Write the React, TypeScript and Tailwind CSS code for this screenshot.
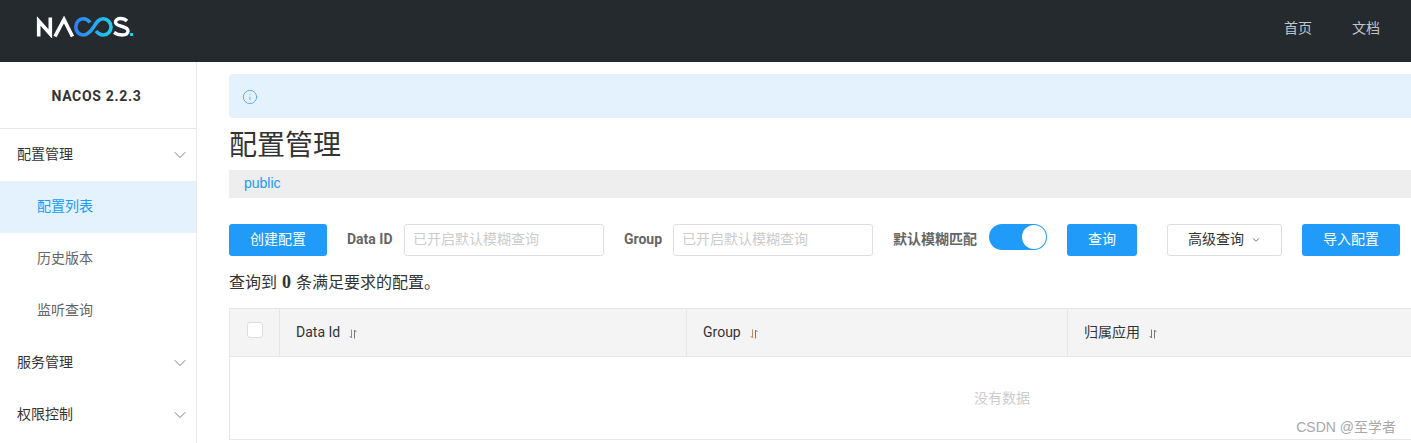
import React from "react";
import { ChevronDown, Info } from "lucide-react";

const font = "font-['Roboto','Noto_Sans_CJK_SC',sans-serif]";

function Logo() {
  return (
    <svg width="98" height="22" viewBox="0 0 98 22" fill="none" aria-label="NACOS">
      <defs>
        <linearGradient id="loop" x1="38" y1="0" x2="77" y2="0" gradientUnits="userSpaceOnUse">
          <stop offset="0" stopColor="#2f7cf6" />
          <stop offset="1" stopColor="#1fd0ee" />
        </linearGradient>
      </defs>
      <path d="M2.7 20.5V5L14.3 18V1.5" stroke="#fff" strokeWidth="3.6" />
      <path d="M19 20.5L28 3.5L36.5 20.5" stroke="#fff" strokeWidth="3.6" />
      <path
        d="M54 6.5C52 3.8 50 2.7 47.5 2.7C43 2.7 39.8 6.5 39.8 11C39.8 15.5 43 19 47.5 19C52 19 55 15 58 10.5C60.5 6.5 62.5 2.7 67 2.7C71.5 2.7 75 6.5 75 11C75 15.5 71.5 19 67 19C64 19 62 17.5 60 15"
        stroke="url(#loop)"
        strokeWidth="3.6"
      />
      <path
        d="M91 5C89 3 87 2.5 84.5 2.5C81.5 2.5 79.5 4 79.5 6.3C79.5 11.5 92 9 92 15C92 17.8 89.5 19 86 19C83 19 80.5 18.2 78 16.5"
        stroke="#fff"
        strokeWidth="3.4"
      />
      <rect x="94" y="17" width="3" height="3" fill="#1fd0ee" />
    </svg>
  );
}

function SortIcon({ tint = "#8a8aa8" }: { tint?: string }) {
  return (
    <svg width="8" height="10" viewBox="0 0 8 10" fill="none" stroke={tint} strokeWidth="1" className="mt-0.5">
      <path d="M2.5 0.5V9M0.5 7L2.5 9" />
      <path d="M5.5 9.5V1M5.5 1L7.5 3" stroke="#777" />
    </svg>
  );
}

function NavGroup({ label }: { label: string }) {
  return (
    <div className="h-[52px] flex items-center justify-between pl-[17px] pr-[6px] text-[14px] text-[#333]">
      <span className="pb-0.5">{label}</span>
      <ChevronDown className="w-5 h-5 text-[#666]" strokeWidth={1} />
    </div>
  );
}

function NavItem({ label, active }: { label: string; active?: boolean }) {
  return (
    <div
      className={`h-[52px] flex items-center pl-[37px] pb-0.5 text-[14px] ${
        active ? "bg-[#e3f2fd] text-[#209bfa]" : "text-[#666]"
      }`}
    >
      {label}
    </div>
  );
}

function PrimaryButton({ label, width }: { label: string; width: string }) {
  return (
    <button className={`${width} h-8 shrink-0 rounded-[3px] bg-[#209bfa] pb-0.5 text-[14px] text-white`}>
      {label}
    </button>
  );
}

function SearchInput() {
  return (
    <input
      readOnly
      placeholder="已开启默认模糊查询"
      className="w-[200px] h-8 shrink-0 rounded-[3px] border border-[#dcdee3] px-2 pb-0.5 text-[14px] placeholder:text-[#ccc]"
    />
  );
}

export default function App() {
  return (
    <div className={`${font} w-[1411px] h-[443px] overflow-hidden relative bg-white flex flex-col`}>
      <header className="h-[62px] shrink-0 bg-[#252a2f] flex items-center justify-between pl-9 pr-[31px] text-[14px] text-[#c2c5c8]">
        <div className="-mt-[9px]">
          <Logo />
        </div>
        <nav className="flex gap-[40px] -mt-[6px]">
          <span>首页</span>
          <span>文档</span>
        </nav>
      </header>
      <div className="flex flex-1 min-h-0">
        <aside className="w-[197px] shrink-0 border-r border-[#eaeaea]">
          <div className="h-[67px] flex items-center justify-center border-b border-[#e6e6e6] text-[14px] font-bold text-[#333] tracking-[0.7px] pr-[3px] pt-0.5">
            NACOS 2.2.3
          </div>
          <NavGroup label="配置管理" />
          <NavItem label="配置列表" active />
          <NavItem label="历史版本" />
          <NavItem label="监听查询" />
          <NavGroup label="服务管理" />
          <NavGroup label="权限控制" />
        </aside>
        <main className="flex-1 min-w-0 pl-8 pt-3">
          <div className="h-11 rounded-l-[3px] bg-[#e3f2fd] flex items-center pl-[13px] pt-0.5">
            <Info className="w-4 h-4 text-[#4d9ffa]" strokeWidth={1.25} />
          </div>
          <h1 className="mt-[10px] h-[35px] text-[28px] leading-[35px] text-[#333]">配置管理</h1>
          <div className="mt-[7px] h-7 bg-[#eee] flex items-center pl-[15px] pb-0.5 text-[14px] font-['Liberation_Sans',sans-serif] text-[#209bfa]">
            public
          </div>
          <div className="mt-[26px] flex items-start w-[1171px]">
            <PrimaryButton label="创建配置" width="w-[98px]" />
            <label className="ml-5 w-[57px] shrink-0 h-8 leading-[30px] text-[14px] font-bold text-[#666]">
              Data ID
            </label>
            <SearchInput />
            <label className="ml-5 w-[49px] shrink-0 h-8 leading-[30px] text-[14px] font-bold text-[#666]">
              Group
            </label>
            <SearchInput />
            <label className="ml-5 w-[96px] shrink-0 h-8 leading-[30px] text-[14px] font-semibold text-[#666]">
              默认模糊匹配
            </label>
            <div className="w-[58px] h-[26px] shrink-0 rounded-full bg-[#209bfa] flex items-center justify-end pr-px">
              <span className="w-6 h-6 rounded-full bg-white" />
            </div>
            <div className="ml-5">
              <PrimaryButton label="查询" width="w-[70px]" />
            </div>
            <button className="ml-[30px] w-[115px] h-8 shrink-0 rounded-[3px] border border-[#dcdee3] bg-white flex items-center justify-center gap-[7px] pb-0.5 text-[14px] text-[#333]">
              高级查询
              <ChevronDown className="w-[10px] h-[10px] text-[#555] mt-0.5" strokeWidth={2} />
            </button>
            <div className="ml-5">
              <PrimaryButton label="导入配置" width="w-[98px]" />
            </div>
          </div>
          <p className="mt-[15px] h-[22px] leading-[22px] text-[16px] text-[#333]">
            查询到 <strong className="font-['Liberation_Serif',serif] text-[18px] mx-px">0</strong> 条满足要求的配置。
          </p>
          <div className="mt-[15px] w-[1546px] h-[132px] border border-[#e6e6e6]">
            <div className="h-12 flex bg-[#f4f4f4] border-b border-[#e6e6e6] text-[14px] text-[#333]">
              <div className="w-[50px] shrink-0 border-r border-[#e6e6e6] flex justify-center pt-[13px]">
                <span className="w-4 h-4 rounded-[3px] border border-[#dcdee3] bg-white" />
              </div>
              <div className="w-[407px] shrink-0 border-r border-[#e6e6e6] flex items-center gap-[9px] pl-4">
                Data Id <SortIcon />
              </div>
              <div className="w-[381px] shrink-0 border-r border-[#e6e6e6] flex items-center gap-[9px] pl-4">
                Group <SortIcon tint="#c98a5a" />
              </div>
              <div className="flex-1 flex items-center gap-[9px] pl-4">
                归属应用 <SortIcon tint="#777" />
              </div>
            </div>
            <div className="h-[82px] flex items-center justify-center text-[14px] text-[#ccc]">没有数据</div>
          </div>
        </main>
      </div>
      <span className="absolute right-[15px] top-[417px] text-[14px] leading-5 text-[#a8a8a8] font-['Liberation_Sans','Noto_Sans_CJK_SC',sans-serif]">
        CSDN @至学者
      </span>
    </div>
  );
}
